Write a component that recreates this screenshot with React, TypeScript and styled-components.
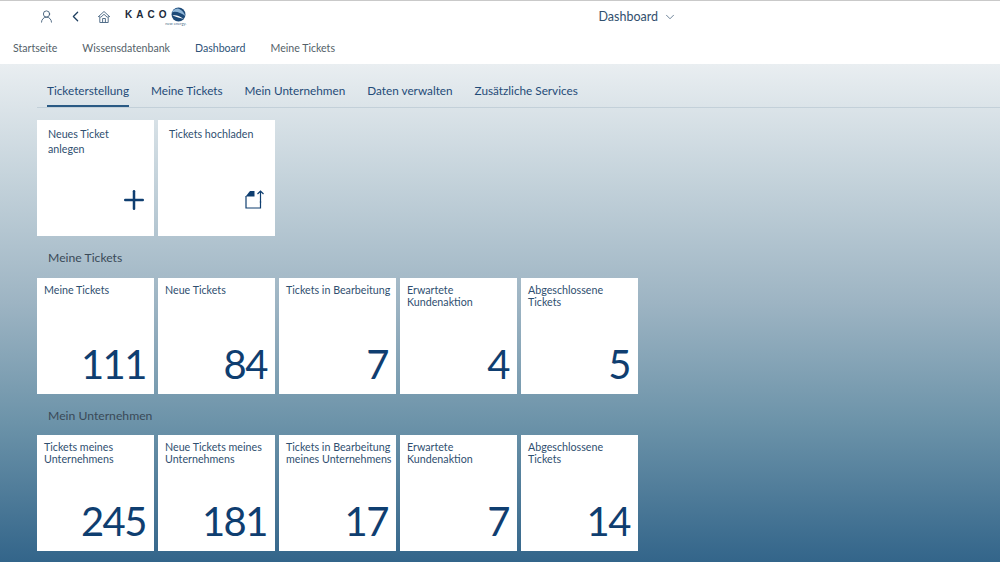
import styled, { createGlobalStyle } from 'styled-components';
import { ChevronDown, ChevronLeft, Plus, UserRound } from 'lucide-react';

const GlobalStyle = createGlobalStyle`
	html, body {
		margin: 0;
		padding: 0;
		height: 100%;
		overflow: hidden;
		background: #fff;
		font-family: 'Lato', 'Liberation Sans', sans-serif;
	}
`

const Page = styled.div`
	width: 1000px;
	height: 562px;
	display: flex;
	flex-direction: column;
	overflow: hidden;
`

const Header = styled.header`
	height: 64px;
	flex: none;
	box-sizing: border-box;
	background: #fff;
	border-top: 1px solid #c9c9c9;
	display: flex;
	flex-direction: column;
`

const TopRow = styled.div`
	height: 31px;
	display: flex;
	align-items: center;
`

const TopLeft = styled.div`
	display: flex;
	align-items: center;
	padding-left: 39px;
	color: #2f4d6b;
`

const IconSlot = styled.span<{ $w: number }>`
	width: ${(p) => p.$w}px;
	display: flex;
	align-items: center;
`

const Logo = styled.div`
	display: flex;
	flex-direction: column;
	align-items: flex-end;
	margin-top: -1px;
`

const LogoTop = styled.div`
	display: flex;
	align-items: center;
	gap: 1px;
`

const LogoWord = styled.span`
	font-family: 'Liberation Sans', sans-serif;
	font-size: 10px;
	font-weight: 700;
	letter-spacing: 4px;
	color: #1c2a3a;
	line-height: 11px;
`

const LogoTag = styled.span`
	font-size: 4px;
	line-height: 4px;
	color: #4a6b8a;
`

const TitleMenu = styled.div`
	display: flex;
	align-items: center;
	gap: 5px;
	font-size: 12.5px;
	color: #32506e;
	margin-left: 412px;
`

const MainNav = styled.nav`
	display: flex;
	gap: 25px;
	padding: 4px 0 0 13px;
`

const NavItem = styled.span<{ $active?: boolean }>`
	font-size: 10.6px;
	line-height: 24px;
	color: ${(p) => (p.$active ? '#2f5378' : '#545f69')};
`

const Content = styled.main`
	flex: 1;
	background: linear-gradient(180deg, #e9eef1 0%, #c6d4dc 22%, #9db4c3 48%, #6c93a9 72%, #33658a 100%);
	padding: 0 0 0 37px;
`

const TabBar = styled.div`
	display: flex;
	gap: 22px;
	height: 44px;
	box-sizing: border-box;
	padding-left: 10px;
	border-bottom: 1px solid #c3d0d9;
`

const Tab = styled.span<{ $active?: boolean }>`
	font-size: 11.75px;
	line-height: 16px;
	padding-top: 19px;
	color: #1f4b78;
	box-sizing: border-box;
	height: 43px;
	border-bottom: ${(p) => (p.$active ? '2px solid #2a5a84' : 'none')};
`

const Section = styled.section`
	padding-top: 12px;
`

const SectionTitle = styled.h2`
	margin: 0;
	padding: 10px 0 0 11px;
	height: 30px;
	box-sizing: border-box;
	font-size: 12.2px;
	line-height: 24px;
	font-weight: 400;
	color: #3a4a58;
`

const TileRow = styled.div<{ $gapTop?: number }>`
	display: flex;
	gap: 4px;
	margin-top: ${(p) => p.$gapTop ?? 0}px;
`

const Tile = styled.div<{ $wide?: boolean }>`
	width: 117px;
	height: 116px;
	box-sizing: border-box;
	background: #fff;
	padding: ${(p) => (p.$wide ? '6px 10px 6px 11px' : '5.5px 6px 6px 7px')};
	display: flex;
	flex-direction: column;
	justify-content: space-between;
`

const TileTitle = styled.div<{ $wide?: boolean }>`
	font-size: 10.7px;
	line-height: ${(p) => (p.$wide ? '15px' : '12px')};
	color: #2f4f70;
	margin-right: ${(p) => (p.$wide ? '0' : '-4px')};
`

const TileValue = styled.div`
	align-self: flex-end;
	font-size: 40px;
	line-height: 40px;
	letter-spacing: -1.5px;
	color: #0f3e70;
	margin-right: 2px;
	margin-bottom: 4px;
`

const TileIcon = styled.div<{ $right: number; $bottom: number }>`
	align-self: flex-end;
	color: #0f3e70;
	display: flex;
	margin-right: ${(p) => p.$right}px;
	margin-bottom: ${(p) => p.$bottom}px;
`

const mineTiles = [
	{ title: 'Meine Tickets', value: 111 },
	{ title: 'Neue Tickets', value: 84 },
	{ title: 'Tickets in Bearbeitung', value: 7 },
	{ title: 'Erwartete Kundenaktion', value: 4 },
	{ title: 'Abgeschlossene Tickets', value: 5 },
];

const companyTiles = [
	{ title: 'Tickets meines Unternehmens', value: 245 },
	{ title: 'Neue Tickets meines Unternehmens', value: 181 },
	{ title: 'Tickets in Bearbeitung meines Unternehmens', value: 17 },
	{ title: 'Erwartete Kundenaktion', value: 7 },
	{ title: 'Abgeschlossene Tickets', value: 14 },
];

function HomeIcon() {
	return (
		<svg width='14' height='14' viewBox='0 0 14 14' fill='none' stroke='#44627f' strokeWidth='0.9'>
			<path d='M1 7 7 1.5 13 7' />
			<path d='M2.8 6v6.5h8.4V6' />
			<path d='M5.6 12.5V8.5h2.8v4' />
			<path d='M3.5 7.5 7 4.3l3.5 3.2' />
		</svg>
	)
}

function Globe() {
	return (
		<svg width='15' height='15' viewBox='0 0 14 14'>
			<circle cx='7' cy='7' r='6.5' fill='#1d4a78' />
			<path d='M.8 5.2C4 3.4 9 5.4 13.4 8.4 12.8 6 9.4 1.6 6 1.4 3.6 1.6 1.6 3 .8 5.2Z' fill='#8fb6d8' />
			<path d='M1.4 8c3-1 7 .6 10.4 3.2C9 10.4 4.5 9.5 1.4 8Z' fill='#fff' />
		</svg>
	)
}

function UploadIcon() {
	return (
		<svg width='19' height='19' viewBox='0 0 19 19' fill='none' stroke='#0f3e70' strokeWidth='1.2'>
			<path d='M1 6V18H15.5V11' />
			<path d='M.6 6.4 5 1H9.5V6.4Z' fill='#0f3e70' stroke='none' />
			<path d='M15.5 13V1M12.5 4 15.5 1l3 3' />
		</svg>
	)
}

export default function App() {
	return (
		<Page>
			<GlobalStyle />
			<Header>
				<TopRow>
					<TopLeft>
						<IconSlot $w={28}><UserRound size={15} strokeWidth={1.3} /></IconSlot>
						<IconSlot $w={30}><ChevronLeft size={17} strokeWidth={1.8} color='#1f3f60' /></IconSlot>
						<IconSlot $w={28}><HomeIcon /></IconSlot>
						<Logo>
							<LogoTop>
								<LogoWord>KACO</LogoWord>
								<Globe />
							</LogoTop>
							<LogoTag>new energy.</LogoTag>
						</Logo>
					</TopLeft>
					<TitleMenu>
						Dashboard
						<ChevronDown size={14} strokeWidth={1.2} />
					</TitleMenu>
				</TopRow>
				<MainNav>
					<NavItem>Startseite</NavItem>
					<NavItem>Wissensdatenbank</NavItem>
					<NavItem $active>Dashboard</NavItem>
					<NavItem>Meine Tickets</NavItem>
				</MainNav>
			</Header>
			<Content>
				<TabBar>
					<Tab $active>Ticketerstellung</Tab>
					<Tab>Meine Tickets</Tab>
					<Tab>Mein Unternehmen</Tab>
					<Tab>Daten verwalten</Tab>
					<Tab>Zusätzliche Services</Tab>
				</TabBar>
				<Section>
					<TileRow>
						<Tile $wide>
							<TileTitle $wide>Neues Ticket<br />anlegen</TileTitle>
							<TileIcon $right={-5} $bottom={15}><Plus size={30} strokeWidth={2} /></TileIcon>
						</Tile>
						<Tile $wide>
							<TileTitle $wide>Tickets hochladen</TileTitle>
							<TileIcon $right={1} $bottom={21}><UploadIcon /></TileIcon>
						</Tile>
					</TileRow>
				</Section>
				<SectionTitle>Meine Tickets</SectionTitle>
				<TileRow $gapTop={12}>
					{mineTiles.map((tile) => (
						<Tile key={tile.title}>
							<TileTitle>{tile.title}</TileTitle>
							<TileValue>{tile.value}</TileValue>
						</Tile>
					))}
				</TileRow>
				<SectionTitle>Mein Unternehmen</SectionTitle>
				<TileRow $gapTop={11}>
					{companyTiles.map((tile) => (
						<Tile key={tile.title}>
							<TileTitle>{tile.title}</TileTitle>
							<TileValue>{tile.value}</TileValue>
						</Tile>
					))}
				</TileRow>
			</Content>
		</Page>
	)
}
